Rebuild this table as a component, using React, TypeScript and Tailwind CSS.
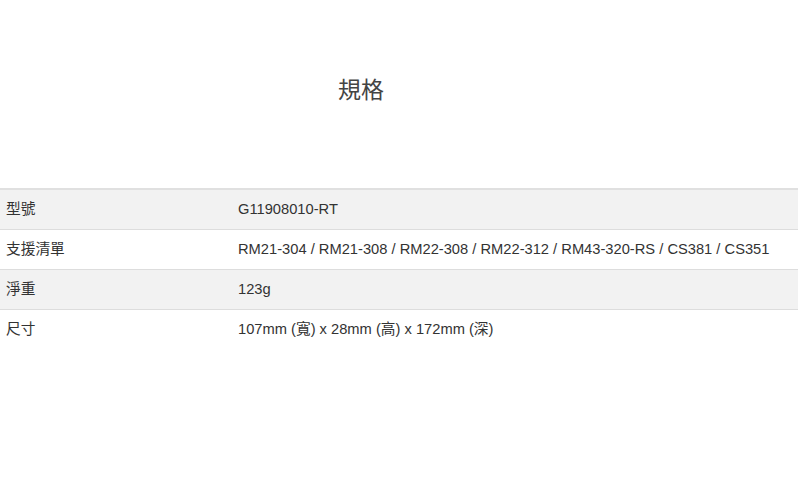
const specs = [
  { label: "型號", value: "G11908010-RT" },
  { label: "支援清單", value: "RM21-304 / RM21-308 / RM22-308 / RM22-312 / RM43-320-RS / CS381 / CS351" },
  { label: "淨重", value: "123g" },
  { label: "尺寸", value: "107mm (寬) x 28mm (高) x 172mm (深)" }
];

export default function App() {
  return (
    <div
      className="h-[496px] w-[800px] bg-white text-[#333]"
      style={{ fontFamily: '"Liberation Sans", Arial, "Noto Sans CJK TC", sans-serif' }}
    >
      <div className="w-[722px] pt-[74px] text-center text-[23px] leading-[32px] text-[#444]">規格</div>
      <table className="mt-[82px] w-[798px] border-collapse text-[14.7px]">
        <tbody>
          {specs.map((row, i) => {
            const last = i === specs.length - 1;
            const cell =
              "h-[40px] px-[6px] align-middle " +
              (last ? "" : "border-b border-[#dddddd] ") +
              (i === 0 ? "border-t-2 border-t-[#e0e0e0]" : "");
            return (
              <tr key={row.label} className={i % 2 === 0 ? "bg-[#f2f2f2]" : "bg-white"}>
                <td className={cell + " w-[232px]"}>{row.label}</td>
                <td className={cell}>{row.value}</td>
              </tr>
            );
          })}
        </tbody>
      </table>
    </div>
  );
}
